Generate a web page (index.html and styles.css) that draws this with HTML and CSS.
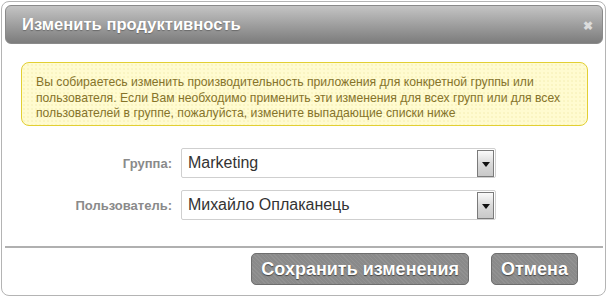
FILE: index.html
```html
<!DOCTYPE html>
<html lang="ru">
<head>
  <meta charset="UTF-8" />
  <title>Изменить продуктивность</title>
  <link rel="stylesheet" href="styles.css">
</head>
<body>
  <div class="dialog">
    <!-- header -->
    <div class="titlebar">
      <span class="title">Изменить продуктивность</span>
      <span class="close">&#10006;</span>
    </div>
    <div class="content">
      <div class="notice">Вы собираетесь изменить производительность приложения для конкретной группы или пользователя. Если Вам необходимо применить эти изменения для всех групп или для всех пользователей в группе, пожалуйста, измените выпадающие списки ниже</div>
      <div class="form">
        <div class="row">
          <label class="lbl">Группа:</label>
          <div class="select"><span class="val">Marketing</span><span class="arrow"></span></div>
        </div>
        <div class="row">
          <label class="lbl">Пользователь:</label>
          <div class="select"><span class="val">Михайло Оплаканець</span><span class="arrow"></span></div>
        </div>
      </div>
    </div>
    <!-- footer -->
    <div class="footer">
      <button class="btn">Сохранить изменения</button>
      <button class="btn">Отмена</button>
    </div>
  </div>
</body>
</html>
```

FILE: styles.css
```css
*{box-sizing:border-box;margin:0;padding:0}
body{font-family:'Liberation Sans',Arial,sans-serif;background:#fff;width:609px;height:296px;overflow:hidden}
.dialog{margin:1px 0 0 1px;width:605px;height:295px;border:1px solid #b4b4b4;border-radius:8px;background:#fff;padding:3px 2px 0 3px;display:flex;flex-direction:column}
/* title */
.titlebar{height:39px;border:1px solid #8a8a8a;border-radius:6px;background:linear-gradient(#c4c4c4,#9c9c9c 55%,#7c7c7c);display:flex;align-items:center;justify-content:space-between;padding:0 9px 0 16px}
.title{color:#fff;font-weight:bold;font-size:16.6px;text-shadow:0 1px 1px #6a6a6a}
.close{color:#dcdcdc;font-size:12px;font-weight:bold;margin-top:2px}
/* content */
.content{padding:18px 15px 0 16px;border-bottom:2px solid #b0b0b0;height:204px}
.notice{border:1px solid #e2cf32;border-radius:8px;background:#fffbd0;background-image:radial-gradient(#f3ecb0 0.6px,transparent 0.8px);background-size:4px 4px;color:#85732a;font-size:12.2px;line-height:15.5px;padding:12px 14px 10px 14px;height:64px}
.form{margin-top:22px;display:flex;flex-direction:column;gap:12px}
.row{display:flex;align-items:center}
.lbl{width:160px;text-align:right;padding-right:9px;color:#8a8a8a;font-weight:bold;font-size:13px}
.select{width:315px;height:30px;border:1px solid #cfcfcf;border-radius:2px;display:flex;align-items:center;justify-content:space-between;padding:0 1px 0 6px}
.val{font-size:16px;color:#333}
.arrow{width:17px;height:27px;border:1px solid #7a7a7a;background:linear-gradient(#fafafa,#dadada 50%,#c8c8c8);position:relative}
.arrow::after{content:"";position:absolute;left:4px;top:11px;border-left:4px solid transparent;border-right:4px solid transparent;border-top:5px solid #111}
/* footer */
.footer{display:flex;justify-content:flex-end;gap:22px;padding:5px 25px 0 0}
.btn{height:32px;border:1px solid #6e6e6e;border-radius:5px;background:#8a8a8a repeating-linear-gradient(45deg,rgba(255,255,255,.07) 0 1px,transparent 1px 3px);color:#fff;font-family:inherit;font-weight:bold;font-size:18px;text-shadow:0 1px 1px #444;padding:0 9px}
```
